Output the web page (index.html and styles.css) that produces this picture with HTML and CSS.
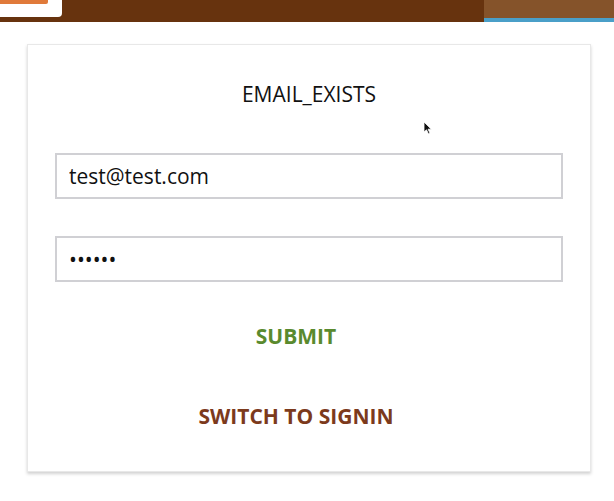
FILE: index.html
```html
<!DOCTYPE html>
<html>
<head>
<meta charset="utf-8">
<link rel="stylesheet" href="styles.css">
</head>
<body>
<header class="topbar">
  <div class="logo-box"><div class="logo-strip"></div></div>
  <div class="topbar-fill"></div>
  <div class="topbar-tab"></div>
</header>
<main class="card">
  <h1 class="title">EMAIL_EXISTS</h1>
  <form class="form">
    <input class="field" type="email" value="test@test.com">
    <input class="field" type="password" value="secret">
    <button class="btn btn-submit" type="button">SUBMIT</button>
    <button class="btn btn-switch" type="button">SWITCH TO SIGNIN</button>
  </form>
</main>
<svg class="cursor" width="10" height="14" viewBox="0 0 10 14"><path d="M1 1 L1 11 L3.5 8.8 L5.5 13 L7 12.3 L5.1 8.2 L8.3 8.2 Z" fill="#111" stroke="#fff" stroke-width="0.8"/></svg>
</body>
</html>
```
FILE: styles.css
```css
html, body {
  margin: 0;
  padding: 0;
  background: #ffffff;
  font-family: "Open Sans", "Noto Sans", sans-serif;
}
body { position: relative; width: 614px; height: 501px; overflow: hidden; }

.topbar {
  display: flex;
  height: 22px;
  background: #67330e;
}
.logo-box {
  width: 62px;
  height: 17px;
  background: #ffffff;
  border-bottom-right-radius: 4px;
}
.logo-strip {
  width: 48px;
  height: 4px;
  background: #e07a3a;
  border-bottom-right-radius: 2px;
}
.topbar-fill { flex: 1; }
.topbar-tab {
  width: 130px;
  height: 18px;
  background: #85532a;
  border-bottom: 4px solid #4a9fc8;
}

.card {
  box-sizing: border-box;
  width: 564px;
  margin: 22px 0 0 27px;
  height: 428px;
  border: 1px solid #e8e8e8;
  box-shadow: 0 2px 3px rgba(0,0,0,0.18);
  background: #fff;
  padding: 35px 27px 0;
}
.title {
  margin: 0;
  text-align: center;
  font-weight: 400;
  font-size: 21px;
  line-height: 28px;
  color: #111;
}
.form {
  display: flex;
  flex-direction: column;
  margin-top: 45px;
}
.field {
  box-sizing: border-box;
  height: 46px;
  border: 2px solid #d0d0d4;
  padding: 0 12px;
  font-family: "Open Sans", sans-serif;
  font-size: 21px;
  color: #111;
  outline: none;
  margin-bottom: 37px;
}
.field[type=password] { margin-bottom: 40px; }
.btn {
  background: none;
  border: none;
  font-family: "Open Sans", sans-serif;
  font-weight: 700;
  font-size: 21px;
  padding: 0;
  align-self: center;
  margin-right: 26px;
  line-height: 28px;
}
.btn-submit { color: #5a8a2e; }
.btn-switch { color: #7c3a1c; margin-top: 52px; }

.cursor {
  position: absolute;
  left: 423px;
  top: 121px;
}
```
